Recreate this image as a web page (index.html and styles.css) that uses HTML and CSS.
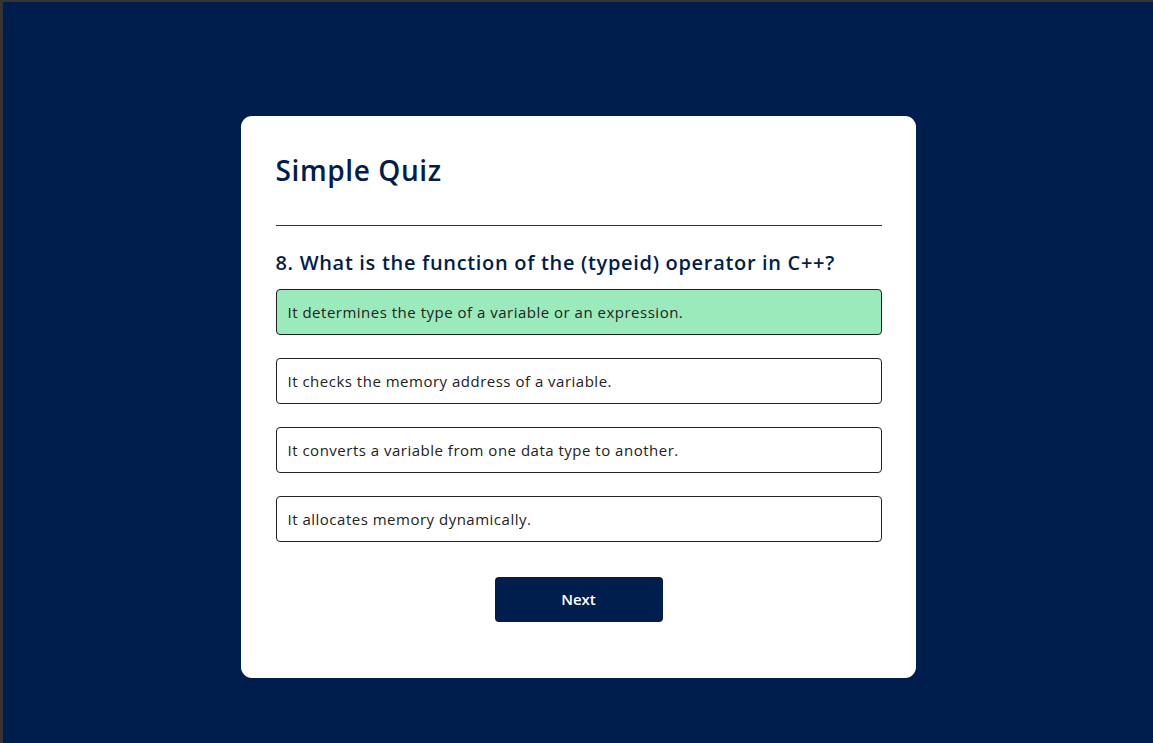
FILE: index.html
```html
<!DOCTYPE html>
<html lang="en">
<head>
<meta charset="utf-8">
<title>Simple Quiz</title>
<link rel="stylesheet" href="styles.css">
</head>
<body>
  <div class="app">
    <h1 class="title">Simple Quiz</h1>
    <div class="quiz">
      <h2 class="question">8. What is the function of the (typeid) operator in C++?</h2>
      <div class="answers">
        <button class="btn correct">It determines the type of a variable or an expression.</button>
        <button class="btn">It checks the memory address of a variable.</button>
        <button class="btn">It converts a variable from one data type to another.</button>
        <button class="btn">It allocates memory dynamically.</button>
      </div>
      <button class="next-btn">Next</button>
    </div>
  </div>
</body>
</html>
```

FILE: styles.css
```css
* {
  margin: 0;
  padding: 0;
  box-sizing: border-box;
  font-family: "Open Sans", "Liberation Sans", sans-serif;
}

body {
  background: #001e4d;
  min-height: 100vh;
  border-top: 2px solid #353535;
  border-left: 3px solid #353535;
  padding-top: 114px;
}

.app {
  background: #fff;
  width: 675px;
  margin: 0 auto;
  border-radius: 11px;
  padding: 34px 34px 34px 35px;
}

.title {
  font-size: 28px;
  line-height: 41px;
  letter-spacing: 0.6px;
  color: #001e4d;
  font-weight: 600;
  border-bottom: 1px solid #333;
  padding-bottom: 34px;
}

.quiz {
  padding: 22px 0 22px;
}

.question {
  font-size: 20px;
  line-height: 30px;
  letter-spacing: 0.68px;
  color: #001e4d;
  font-weight: 600;
}

.answers {
  display: flex;
  flex-direction: column;
  gap: 23px;
  margin-top: 11px;
}

.btn {
  background: #fff;
  color: #222;
  font-size: 15px;
  line-height: 22px;
  letter-spacing: 0.5px;
  font-weight: 500;
  width: 100%;
  border: 1px solid #222;
  padding: 11px;
  text-align: left;
  border-radius: 4px;
}

.btn.correct {
  background: #9aeabc;
}

.next-btn {
  display: block;
  background: #001e4d;
  color: #fff;
  font-size: 15px;
  line-height: 23px;
  font-weight: 600;
  width: 168px;
  border: 0;
  padding: 11px;
  margin: 35px auto 0;
  border-radius: 4px;
}
```
